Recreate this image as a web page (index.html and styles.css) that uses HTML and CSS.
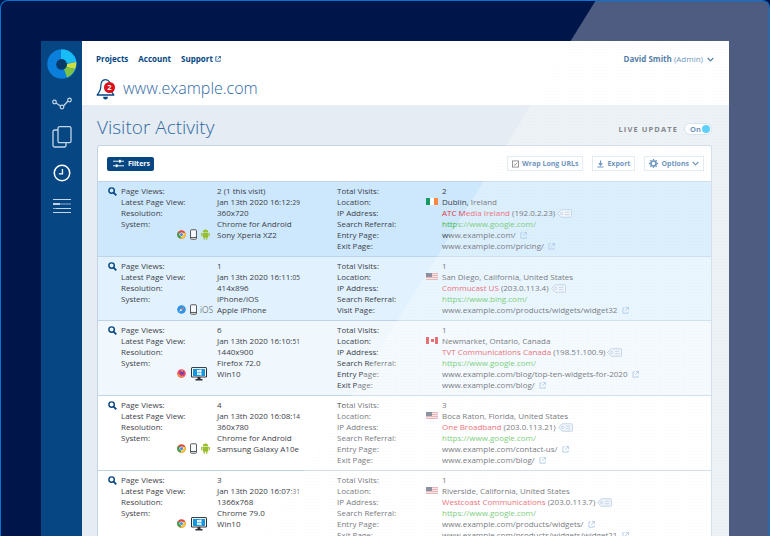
FILE: index.html
```html
<!DOCTYPE html>
<html lang="en">
<head>
    <meta charset="UTF-8">
    <meta name="viewport" content="width=device-width, initial-scale=1.0">
    <title>Visitor Activity</title>
    <link rel="stylesheet" href="styles.css">
</head>
<body>
    <svg class="sprites" width="0" height="0">
        <symbol id="i-search" viewBox="0 0 10 10"><circle cx="4" cy="4" r="3" fill="none" stroke="currentColor" stroke-width="1.6"/><path d="M6.2 6.2L9.2 9.2" stroke="currentColor" stroke-width="2"/></symbol>
        <symbol id="i-ext" viewBox="0 0 8 8"><path d="M3 1H1V7H7V5" fill="none" stroke="currentColor"/><path d="M4.5 .5H7.5V3.5M7.2 .8L3.5 4.5" fill="none" stroke="currentColor"/></symbol>
        <symbol id="i-tag" viewBox="0 0 18 10"><path d="M5 .5H16.5A1 1 0 0 1 17.5 1.5V8.500A1 1 0 0 1 16.500 9.500H5L.7 5Z" fill="#eef4fa" stroke="#9fbbd8"/><circle cx="5.500" cy="5" r="1.500" fill="none" stroke="#9fbbd8"/><path d="M9.500 3.500H15M9.500 6.500H15" stroke="#9fbbd8"/></symbol>
        <symbol id="i-chrome" viewBox="0 0 20 20"><circle cx="10" cy="10" r="9.500" fill="#dd4b3e"/><path d="M10 10L1.800 5.200A9.500 9.500 0 0 0 8 19.300Z" fill="#3ba14f"/><path d="M10 10L8 19.300A9.500 9.500 0 0 0 18.800 6.400L10 6Z" fill="#f7c631"/><circle cx="10" cy="10" r="4.600" fill="#fff"/><circle cx="10" cy="10" r="3.500" fill="#4a8af4"/></symbol>
        <symbol id="i-phone" viewBox="0 0 8 12"><rect x=".6" y=".6" width="6.800" height="10.800" rx="1" fill="#f6fafd" stroke="#444"/><path d="M.6 9.400H7.400" stroke="#444"/></symbol>
        <symbol id="i-android" viewBox="0 0 10 12"><g fill="#97bf2d"><rect x="2" y="4" width="6" height="5.500" rx=".5"/><rect x=".2" y="4" width="1.300" height="4" rx=".6"/><rect x="8.500" y="4" width="1.300" height="4" rx=".6"/><rect x="3" y="9" width="1.300" height="2.800" rx=".6"/><rect x="5.700" y="9" width="1.300" height="2.800" rx=".6"/><path d="M2 3.500A3 3 0 0 1 8 3.500Z"/></g></symbol>
        <symbol id="i-safari" viewBox="0 0 20 20"><circle cx="10" cy="10" r="9.500" fill="#2b93e8"/><path d="M15 5L11.500 11.500 5 15 8.500 8.500Z" fill="#fff"/><path d="M15 5L11.500 11.500 8.500 8.500Z" fill="#e8483a"/></symbol>
        <symbol id="i-firefox" viewBox="0 0 20 20"><circle cx="10" cy="10" r="9.500" fill="#e8436a"/><path d="M1 8A9.500 9.500 0 0 0 19 13C15 17 8 17 5 12Z" fill="#f59b2e"/><circle cx="11" cy="8.500" r="4.500" fill="#6b3fb5"/><path d="M11 1L14 6 9 5Z" fill="#f4c23c"/></symbol>
        <symbol id="i-desktop" viewBox="0 0 16 14"><path d="M1 .6H15A.5.500 0 0 1 15.500 1.100V10H.5V1.100A.5.500 0 0 1 1 .6Z" fill="#fff" stroke="#2c3036"/><rect x="2" y="2" width="12" height="7" fill="#1296e0"/><path d="M6 3.100L7.800 2.900V5.300H6ZM8.200 2.800L10.500 2.500V5.300H8.200ZM6 5.700H7.800V8L6 7.800ZM8.200 5.700H10.500V8.500L8.200 8.100Z" fill="#fff"/><path d="M6.500 10H9.500V12H11.500V13.400H4.500V12H6.500Z" fill="#2c3036"/></symbol>
    </svg>

    <div class="screen">
        <div class="app">
            <nav class="sidebar">
                <svg class="logo" viewBox="0 0 30 30">
                    <circle cx="15" cy="15" r="10" fill="none" stroke="#0a7fdc" stroke-width="9.500"/>
                    <path d="M14 .6A14.500 14.500 0 0 1 29.300 13L19.500 14.500A5 5 0 0 0 14 10Z" fill="#19bdf5"/>
                    <path d="M29.300 13A14.500 14.500 0 0 1 28 20L19.300 18A5 5 0 0 0 19.700 15Z" fill="#cfe040"/>
                    <path d="M28 20A14.500 14.500 0 0 1 20 28.500L17 20A5 5 0 0 0 19.300 18Z" fill="#7dc242"/>
                    <circle cx="14.500" cy="15.500" r="5.300" fill="#053a6b"/>
                </svg>
                <svg class="side-icon side-graph" viewBox="0 0 20 14"><g fill="none" stroke="#c4d6e8" stroke-width="1.200"><circle cx="2.500" cy="5" r="1.800"/><circle cx="10" cy="10" r="1.800"/><circle cx="17.500" cy="3" r="1.800"/><path d="M4 6L8.500 9M11.500 9L16 4"/></g></svg>
                <svg class="side-icon side-copy" viewBox="0 0 20 22"><g fill="none" stroke="#c4d6e8" stroke-width="1.300"><rect x="6" y=".7" width="13" height="16" rx="1.500"/><path d="M6 4H2.500A1.500 1.500 0 0 0 1 5.500V19.500A1.500 1.500 0 0 0 2.500 21H12.500A1.500 1.500 0 0 0 14 19.500V17"/></g></svg>
                <svg class="side-icon side-clock" viewBox="0 0 20 20"><circle cx="10" cy="10" r="8.600" fill="none" stroke="#fff" stroke-width="1.700"/><path d="M10.500 5.500V11H6.500" fill="none" stroke="#fff" stroke-width="1.500"/></svg>
                <svg class="side-icon side-list" viewBox="0 0 18 14"><g stroke="#c4d6e8" stroke-width="1"><path d="M0 .5H18M0 13.500H18"/><path d="M0 5H7" stroke="#fff" stroke-width="1.300"/><path d="M7 5H18M0 9.500H3" stroke="#8fb0d0"/><path d="M3 9.500H18" stroke="#c4d6e8"/></g></svg>
            </nav>

            <main class="main">
                <header class="topbar">
                    <div class="topnav">
                        <a href="#">Projects</a>
                        <a href="#">Account</a>
                        <a href="#" class="support">Support <svg class="nav-ext"><use href="#i-ext"/></svg></a>
                        <span class="user"><b>David Smith</b> (Admin) <svg class="chev" viewBox="0 0 8 5"><path d="M.8 .8L4 4 7.200 .8" fill="none" stroke="currentColor" stroke-width="1.400"/></svg></span>
                    </div>
                    <div class="site">
                        <span class="bell">
                            <svg class="bell-icon" viewBox="0 0 20 20" preserveAspectRatio="none"><path d="M10 1.500C6 1.500 5 5 5 8C5 11 3.500 13 1.200 15.500H18.800C16.500 13 15 11 15 8C15 5 14 1.500 10 1.500Z" fill="#fff" stroke="#064682" stroke-width="1.300" stroke-linejoin="round"/><path d="M7.500 17H12.500A2.500 2.500 0 0 1 7.500 17Z" fill="#064682"/></svg>
                            <span class="badge">2</span>
                        </span>
                        <span class="site-name">www.example.com</span>
                    </div>
                </header>

                <div class="content">
                    <div class="title-row">
                        <h1>Visitor Activity</h1>
                        <div class="live">LIVE UPDATE <span class="toggle">On<i></i></span></div>
                    </div>

                    <section class="card">
                        <div class="toolbar">
                            <button class="btn-filter"><svg class="filter-icon" viewBox="0 0 12 9"><path d="M0 2H12M0 7H12" stroke="#fff"/><rect x="6.500" y=".5" width="2" height="3" fill="#fff"/><rect x="3" y="5.500" width="2" height="3" fill="#fff"/></svg>Filters</button>
                            <span class="toolbar-gap"></span>
                            <button class="btn"><svg class="btn-icon" viewBox="0 0 8 8"><rect x=".5" y=".5" width="7" height="7" fill="none" stroke="#555"/><path d="M2 4.500L3.300 5.500 6 2.500" fill="none" stroke="#555"/></svg>Wrap Long URLs</button>
                            <button class="btn"><svg class="btn-icon" viewBox="0 0 8 8"><path d="M4 0V5M2 3L4 5.500 6 3" fill="none" stroke="#2f6aa3" stroke-width="1.300"/><path d="M.5 7.400H7.500" stroke="#2f6aa3" stroke-width="1.200"/></svg>Export</button>
                            <button class="btn"><svg class="btn-icon gear" viewBox="0 0 10 10"><circle cx="5" cy="5" r="2.800" fill="none" stroke="#2f6aa3" stroke-width="1.800"/><path d="M5 0V2M5 8V10M0 5H2M8 5H10M1.500 1.500L2.800 2.800M7.200 7.200L8.500 8.500M1.500 8.500L2.800 7.200M7.200 2.800L8.500 1.500" stroke="#2f6aa3" stroke-width="1.500"/></svg>Options<svg class="chev btn-chev" viewBox="0 0 8 5"><path d="M.8 .8L4 4 7.200 .8" fill="none" stroke="currentColor" stroke-width="1.400"/></svg></button>
                        </div>

                        <article class="visit visit-new">
                            <svg class="search"><use href="#i-search"/></svg>
                            <dl class="left">
                                <dt>Page Views:</dt><dd>2 (1 this visit)</dd>
                                <dt>Latest Page View:</dt><dd>Jan 13th 2020 16:12:<small>29</small></dd>
                                <dt>Resolution:</dt><dd>360x720</dd>
                                <dt>System:</dt><dd>Chrome for Android</dd>
                                <dt class="sys"><svg class="ic-round"><use href="#i-chrome"/></svg><svg class="ic-phone"><use href="#i-phone"/></svg><svg class="ic-android"><use href="#i-android"/></svg></dt><dd>Sony Xperia XZ2</dd>
                            </dl>
                            <dl class="right">
                                <dt>Total Visits:</dt><dd>2</dd>
                                <dt class="loc">Location:<i class="flag flag-ie"></i></dt><dd>Dublin, Ireland</dd>
                                <dt>IP Address:</dt><dd><span class="isp">ATC Media Ireland</span> (192.0.2.23) <svg class="tag"><use href="#i-tag"/></svg></dd>
                                <dt>Search Referral:</dt><dd class="ref">https://www.google.com/</dd>
                                <dt>Entry Page:</dt><dd>www.example.com/ <svg class="ext"><use href="#i-ext"/></svg></dd>
                                <dt>Exit Page:</dt><dd>www.example.com/pricing/ <svg class="ext"><use href="#i-ext"/></svg></dd>
                            </dl>
                        </article>

                        <article class="visit visit-recent">
                            <svg class="search"><use href="#i-search"/></svg>
                            <dl class="left">
                                <dt>Page Views:</dt><dd>1</dd>
                                <dt>Latest Page View:</dt><dd>Jan 13th 2020 16:11:<small>05</small></dd>
                                <dt>Resolution:</dt><dd>414x896</dd>
                                <dt>System:</dt><dd>iPhone/iOS</dd>
                                <dt class="sys"><svg class="ic-round"><use href="#i-safari"/></svg><svg class="ic-phone"><use href="#i-phone"/></svg><span class="ios">iOS</span></dt><dd>Apple iPhone</dd>
                            </dl>
                            <dl class="right">
                                <dt>Total Visits:</dt><dd>1</dd>
                                <dt class="loc">Location:<i class="flag flag-us"></i></dt><dd>San Diego, California, United States</dd>
                                <dt>IP Address:</dt><dd><span class="isp">Commucast US</span> (203.0.113.4) <svg class="tag"><use href="#i-tag"/></svg></dd>
                                <dt>Search Referral:</dt><dd class="ref">https://www.bing.com/</dd>
                                <dt>Visit Page:</dt><dd>www.example.com/products/widgets/widget32 <svg class="ext"><use href="#i-ext"/></svg></dd>
                            </dl>
                        </article>

                        <article class="visit visit-old">
                            <svg class="search"><use href="#i-search"/></svg>
                            <dl class="left">
                                <dt>Page Views:</dt><dd>6</dd>
                                <dt>Latest Page View:</dt><dd>Jan 13th 2020 16:10:<small>51</small></dd>
                                <dt>Resolution:</dt><dd>1440x900</dd>
                                <dt>System:</dt><dd>Firefox 72.0</dd>
                                <dt class="sys"><svg class="ic-round"><use href="#i-firefox"/></svg><svg class="ic-desktop"><use href="#i-desktop"/></svg></dt><dd>Win10</dd>
                            </dl>
                            <dl class="right">
                                <dt>Total Visits:</dt><dd>1</dd>
                                <dt class="loc">Location:<i class="flag flag-ca"></i></dt><dd>Newmarket, Ontario, Canada</dd>
                                <dt>IP Address:</dt><dd><span class="isp">TVT Communications Canada</span> (198.51.100.9) <svg class="tag"><use href="#i-tag"/></svg></dd>
                                <dt>Search Referral:</dt><dd class="ref">https://www.google.com/</dd>
                                <dt>Entry Page:</dt><dd>www.example.com/blog/top-ten-widgets-for-2020 <svg class="ext"><use href="#i-ext"/></svg></dd>
                                <dt>Exit Page:</dt><dd>www.example.com/blog/ <svg class="ext"><use href="#i-ext"/></svg></dd>
                            </dl>
                        </article>

                        <article class="visit">
                            <svg class="search"><use href="#i-search"/></svg>
                            <dl class="left">
                                <dt>Page Views:</dt><dd>4</dd>
                                <dt>Latest Page View:</dt><dd>Jan 13th 2020 16:08:<small>14</small></dd>
                                <dt>Resolution:</dt><dd>360x780</dd>
                                <dt>System:</dt><dd>Chrome for Android</dd>
                                <dt class="sys"><svg class="ic-round"><use href="#i-chrome"/></svg><svg class="ic-phone"><use href="#i-phone"/></svg><svg class="ic-android"><use href="#i-android"/></svg></dt><dd>Samsung Galaxy A10e</dd>
                            </dl>
                            <dl class="right">
                                <dt>Total Visits:</dt><dd>3</dd>
                                <dt class="loc">Location:<i class="flag flag-us"></i></dt><dd>Boca Raton, Florida, United States</dd>
                                <dt>IP Address:</dt><dd><span class="isp">One Broadband</span> (203.0.113.21) <svg class="tag"><use href="#i-tag"/></svg></dd>
                                <dt>Search Referral:</dt><dd class="ref">https://www.google.com/</dd>
                                <dt>Entry Page:</dt><dd>www.example.com/contact-us/ <svg class="ext"><use href="#i-ext"/></svg></dd>
                                <dt>Exit Page:</dt><dd>www.example.com/blog/ <svg class="ext"><use href="#i-ext"/></svg></dd>
                            </dl>
                        </article>

                        <article class="visit">
                            <svg class="search"><use href="#i-search"/></svg>
                            <dl class="left">
                                <dt>Page Views:</dt><dd>3</dd>
                                <dt>Latest Page View:</dt><dd>Jan 13th 2020 16:07:<small>31</small></dd>
                                <dt>Resolution:</dt><dd>1366x768</dd>
                                <dt>System:</dt><dd>Chrome 79.0</dd>
                                <dt class="sys"><svg class="ic-round"><use href="#i-chrome"/></svg><svg class="ic-desktop"><use href="#i-desktop"/></svg></dt><dd>Win10</dd>
                            </dl>
                            <dl class="right">
                                <dt>Total Visits:</dt><dd>1</dd>
                                <dt class="loc">Location:<i class="flag flag-us"></i></dt><dd>Riverside, California, United States</dd>
                                <dt>IP Address:</dt><dd><span class="isp">Westcoast Communications</span> (203.0.113.7) <svg class="tag"><use href="#i-tag"/></svg></dd>
                                <dt>Search Referral:</dt><dd class="ref">https://www.google.com/</dd>
                                <dt>Entry Page:</dt><dd>www.example.com/products/widgets/ <svg class="ext"><use href="#i-ext"/></svg></dd>
                                <dt>Exit Page:</dt><dd>www.example.com/products/widgets/widget21 <svg class="ext"><use href="#i-ext"/></svg></dd>
                            </dl>
                        </article>
                    </section>
                </div>
            </main>
        </div>
        <div class="sheen"></div>
    </div>
</body>
</html>
```

FILE: styles.css
```css
* {
    box-sizing: border-box;
}
html, body {
    margin: 0;
    height: 536px;
    overflow: hidden;
    background-color: #00164a;
}
body {
    font-family: "Open Sans", sans-serif;
    font-size: 8px;
    color: #3c4148;
}
.sprites {
    position: absolute;
}
.screen {
    position: relative;
    height: 536px;
    padding: 40px 41px 0;
    border-top: 1px solid #0a74d2;
    border-left: 1px solid #0a74d2;
    border-right: 1px solid #0a74d2;
    border-radius: 8px 8px 0 0;
    overflow: hidden;
    background-color: #00164a;
}
/* big diagonal highlight lying over the whole screenshot */
.sheen {
    position: absolute;
    inset: -1px;
    pointer-events: none;
    background-color: rgba(255, 255, 255, 0.3);
    background-image: radial-gradient(rgba(90, 125, 170, 0.04) 0.7px, transparent 0.8px);
    background-size: 3px 3px;
    clip-path: polygon(596px 0, 770px 0, 770px 536px, 264px 536px);
}
.app {
    display: flex;
    width: 688px;
    height: 500px;
    margin-left: -1px;
}
.sidebar {
    width: 41px;
    flex: none;
    display: flex;
    flex-direction: column;
    align-items: center;
    background-color: #064682;
}
.logo {
    width: 30px;
    height: 30px;
    margin-top: 8px;
}
.side-icon {
    width: 20px;
}
.side-graph {
    height: 14px;
    margin-top: 18px;
}
.side-copy {
    height: 22px;
    margin-top: 15px;
}
.side-clock {
    height: 18px;
    margin-top: 16px;
}
.side-list {
    width: 18px;
    height: 14px;
    margin-top: 17px;
}
.main {
    flex: 1;
    min-width: 0;
    background-color: #e6ecf3;
}
.topbar {
    height: 64px;
    background-color: #fff;
    padding: 11px 15px 0 14px;
}
.topnav {
    display: flex;
    align-items: center;
    height: 12px;
    font-weight: 700;
    color: #064682;
}
.topnav a {
    color: #064682;
    text-decoration: none;
    margin-right: 10px;
}
.nav-ext {
    width: 6px;
    height: 6px;
}
.user {
    margin-left: auto;
    font-weight: 400;
    color: #2f6aa3;
}
.user b {
    font-weight: 700;
    color: #064682;
}
.chev {
    width: 7px;
    height: 5px;
    margin-left: 2px;
    color: #064682;
}
.site {
    display: flex;
    align-items: center;
    margin-top: 13px;
}
.bell {
    position: relative;
    width: 20px;
    height: 21px;
}
.bell-icon {
    display: block;
    width: 19px;
    height: 22px;
}
.badge {
    position: absolute;
    top: 4px;
    left: 8px;
    width: 11px;
    height: 11px;
    border-radius: 50%;
    background-color: #dc0f1a;
    color: #fff;
    font-size: 7.5px;
    font-weight: 700;
    line-height: 11px;
    text-align: center;
}
.site-name {
    margin-left: 7px;
    font-size: 16px;
    font-weight: 300;
    color: #2f6aa3;
}
.content {
    padding: 0 17px 0 15px;
}
.title-row {
    display: flex;
    align-items: center;
    justify-content: space-between;
    height: 40px;
    padding-top: 4px;
}
h1 {
    margin: 0;
    font-size: 19px;
    font-weight: 300;
    color: #2f6aa3;
}
.live {
    display: flex;
    align-items: center;
    margin-top: 4px;
    font-size: 7.5px;
    font-weight: 700;
    letter-spacing: 1.1px;
    color: #4e5359;
}
.toggle {
    display: flex;
    align-items: center;
    justify-content: space-between;
    width: 28px;
    height: 12px;
    margin-left: 6px;
    padding: 0 1px 0 5px;
    border: 1px solid #c6d8ea;
    border-radius: 6px;
    background-color: #fff;
    color: #2f6aa3;
    font-size: 7.5px;
    letter-spacing: 0;
}
.toggle i {
    width: 8px;
    height: 8px;
    border-radius: 50%;
    background-color: #19bdf5;
}
.card {
    background-color: #fff;
    border: 1px solid #c3d3e4;
    border-bottom: none;
    border-radius: 3px 3px 0 0;
}
.toolbar {
    display: flex;
    align-items: center;
    height: 35px;
    padding: 0 7px 0 9px;
    gap: 9px;
}
.toolbar-gap {
    flex: 1;
}
button {
    display: flex;
    align-items: center;
    height: 15px;
    padding: 0 4px;
    font-family: inherit;
    font-size: 7px;
    font-weight: 700;
    white-space: nowrap;
}
.btn-filter {
    height: 14px;
    padding: 0 4px 0 6px;
    border: none;
    border-radius: 2px;
    background-color: #064682;
    color: #fff;
}
.filter-icon {
    width: 11px;
    height: 9px;
    margin-right: 4px;
}
.btn {
    border: 1px solid #d9e4ef;
    background-color: #fff;
    color: #2f6aa3;
}
.btn-icon {
    width: 7px;
    height: 8px;
    margin-right: 3px;
}
.gear {
    width: 9px;
    height: 9px;
}
.btn-chev {
    margin-left: 3px;
    color: #2f6aa3;
}
.visit {
    display: flex;
    padding: 3px 0 5px 10px;
    border-top: 1px solid #bcd3e8;
    background-color: #fff;
}
.visit-new {
    background-color: #cde8fd;
}
.visit-recent {
    background-color: #e1f2fe;
}
.visit-old {
    background-color: #f0f8fe;
}
.search {
    width: 9px;
    height: 9px;
    flex: none;
    margin: 2px 4px 0 0;
    color: #064682;
}
dl {
    display: grid;
    margin: 0;
    grid-auto-rows: 11px;
    line-height: 11px;
    white-space: nowrap;
}
dt, dd {
    margin: 0;
}
.left {
    grid-template-columns: 96px 120px;
}
.right {
    grid-template-columns: 105px auto;
}
.sys {
    display: flex;
    align-items: center;
    padding-left: 56px;
}
.ic-round {
    width: 9px;
    height: 9px;
}
.ic-phone {
    width: 7px;
    height: 11px;
    margin-left: 4px;
}
.ic-android {
    width: 9px;
    height: 11px;
    margin-left: 4px;
}
.ic-desktop {
    width: 16px;
    height: 14px;
    margin-left: 5px;
}
.ios {
    margin-left: 3px;
    font-size: 8.5px;
    font-weight: 300;
}
small {
    font-size: 6.5px;
}
.loc {
    display: flex;
    align-items: center;
    justify-content: space-between;
    padding-right: 4px;
}
.flag {
    width: 12px;
    height: 7px;
}
.flag-ie {
    background: linear-gradient(to right, #169b62 33%, #fff 33% 66%, #ff883e 66%);
}
.flag-us {
    background:
        linear-gradient(#5a6478, #5a6478) left top / 6px 4px no-repeat,
        repeating-linear-gradient(#e0989e 0 1px, #f2d8da 1px 2px);
}
.flag-ca {
    background:
        linear-gradient(#d8343c, #d8343c) center / 3px 3px no-repeat,
        linear-gradient(to right, #d8343c 25%, #fff 25% 75%, #d8343c 75%);
}
.isp {
    color: #e2323c;
}
.ref {
    color: #3fb83f;
}
.tag {
    width: 15px;
    height: 9px;
    vertical-align: -1.500px;
}
.ext {
    width: 7px;
    height: 7px;
    margin-left: 2px;
    vertical-align: -1px;
    color: #8fb6de;
}
```
